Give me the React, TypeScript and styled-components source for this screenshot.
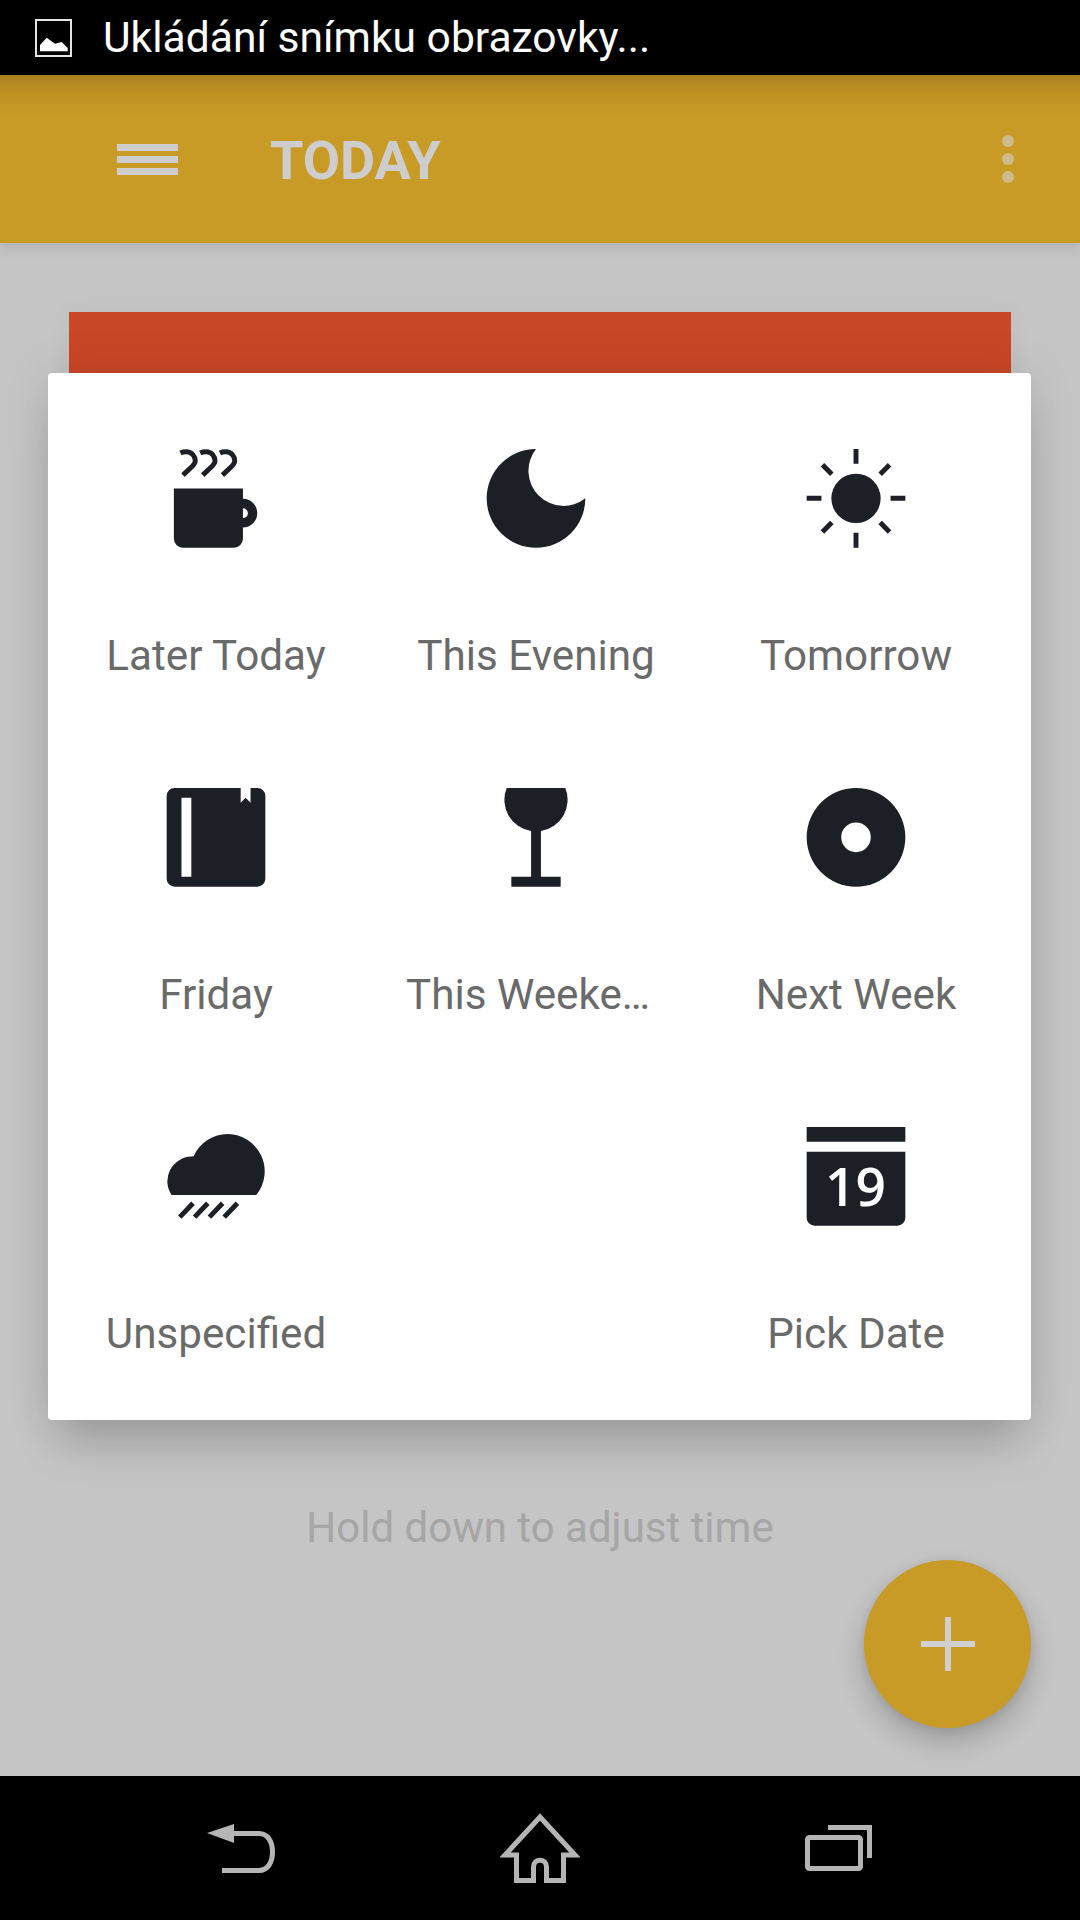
import React from 'react';
import styled, { createGlobalStyle } from 'styled-components';

const GlobalStyle = createGlobalStyle`
  html, body {
    margin: 0;
    padding: 0;
    background: #000;
  }
  * {
    box-sizing: border-box;
  }
`;

const Screen = styled.div`
  width: 1080px;
  height: 1920px;
  display: flex;
  flex-direction: column;
  overflow: hidden;
  font-family: Roboto, "Liberation Sans", sans-serif;
`;

const StatusBar = styled.div`
  height: 75px;
  flex: none;
  background: #000;
  display: flex;
  align-items: center;
  gap: 31px;
  padding-left: 35px;
`;

const StatusText = styled.span`
  color: #fff;
  font-size: 42.6px;
  line-height: 75px;
`;

const AppBar = styled.header`
  height: 168px;
  flex: none;
  position: relative;
  z-index: 2;
  display: flex;
  align-items: center;
  padding: 0 66px 0 117px;
  gap: 92px;
  background: linear-gradient(#ac8320 0, #c09325 22px, #c89a26 40px);
  box-shadow: 0 3px 14px rgba(0, 0, 0, 0.12);
`;

const Title = styled.h1`
  margin: 3px 0 0;
  color: #cdcdcd;
  font-size: 54px;
  font-weight: 700;
  line-height: 60px;
`;

const Dots = styled.div`
  margin-left: auto;
  display: flex;
  flex-direction: column;
  gap: 6px;
`;

const Dot = styled.span`
  width: 12px;
  height: 12px;
  border-radius: 50%;
  background: #cdbb8c;
`;

const Content = styled.main`
  flex: 1;
  position: relative;
  display: flex;
  flex-direction: column;
  padding: 69px 69px 223px;
  background: #c5c5c5;
`;

const Card = styled.div`
  height: 200px;
  background: #c94627;
  box-shadow: 0 0 24px rgba(0, 0, 0, 0.04);
`;

const Hint = styled.p`
  margin: auto 0 0;
  color: #a6a6a6;
  font-size: 42px;
  line-height: 50px;
  text-align: center;
`;

const Dialog = styled.div`
  position: absolute;
  top: 130px;
  left: 48px;
  width: 983px;
  padding: 76px 15px 62px 8px;
  display: grid;
  grid-template-columns: repeat(3, 320px);
  row-gap: 108px;
  background: #fff;
  border-radius: 4px;
  box-shadow: 0 0 48px rgba(0, 0, 0, 0.1), 0 34px 44px -12px rgba(0, 0, 0, 0.18);
`;

const Cell = styled.div`
  height: 231px;
  display: flex;
  flex-direction: column;
  align-items: center;
`;

const IconBox = styled.svg`
  width: 100px;
  height: 100px;
  display: block;
  fill: #1c1f26;
  stroke: none;
`;

const Label = styled.div`
  width: 260px;
  margin-top: 83px;
  color: #6a6a6a;
  font-size: 42.2px;
  line-height: 50px;
  text-align: center;
  white-space: nowrap;
  overflow: hidden;
  text-overflow: ellipsis;
`;

const Fab = styled.button`
  position: absolute;
  right: 49px;
  bottom: 48px;
  width: 167px;
  height: 168px;
  padding: 0;
  border: 0;
  border-radius: 50%;
  display: flex;
  align-items: center;
  justify-content: center;
  background: #c89a26;
  box-shadow: 0 14px 28px rgba(0, 0, 0, 0.2), 0 2px 10px rgba(0, 0, 0, 0.08);
`;

const NavBar = styled.nav`
  height: 144px;
  flex: none;
  background: #000;
  display: flex;
  align-items: flex-start;
  gap: 223px;
  padding: 36px 0 0 207px;
`;

const NavIcon = styled.svg`
  display: block;
  height: 72px;
  fill: none;
  stroke: #b5b5b5;
  stroke-width: 5;
`;

const Stroked = styled.g`
  fill: none;
  stroke: #1c1f26;
  stroke-width: 5;
`;

const CupIcon = () => (
  <IconBox viewBox="0 0 100 100">
    <Stroked>
      <path d="M14 4C16 3 18 2.8 20 2.8C25.5 2.8 29 7.5 29 12C29 14.5 27.5 16 26 17.5L16.5 26.5" />
      <path d="M34 4C36 3 38 2.8 40 2.8C45.5 2.8 49 7.5 49 12C49 14.5 47.5 16 46 17.5L36.5 26.5" />
      <path d="M54 4C56 3 58 2.8 60 2.8C65.5 2.8 69 7.5 69 12C69 14.5 67.5 16 66 17.5L56.5 26.5" />
    </Stroked>
    <path d="M7.3 40H77.3V50.5A14.5 14.5 0 0 1 77.3 79.5V91A9 9 0 0 1 68.3 100H16.3A9 9 0 0 1 7.3 91Z M77.3 60V70A5 5 0 0 0 77.3 60Z" fillRule="evenodd" />
  </IconBox>
);

const MoonIcon = () => (
  <IconBox viewBox="0 0 100 100">
    <path d="M50 0A50 50 0 1 0 100 50A35.6 35.6 0 0 1 50 0Z" />
  </IconBox>
);

const SunIcon = () => (
  <IconBox viewBox="0 0 100 100">
    <circle cx="50" cy="50" r="25" />
    <Stroked>
      <path d="M50 0V15M50 85V100M0 50H15M85 50H100M16 16L25.5 25.5M74.5 74.5L84 84M84 16L74.5 25.5M25.5 74.5L16 84" />
    </Stroked>
  </IconBox>
);

const BookIcon = () => (
  <IconBox viewBox="0 0 100 100">
    <path
      fillRule="evenodd"
      d="M8 0H75V15L80 10L85 15V0H92A8 8 0 0 1 100 8V92A8 8 0 0 1 92 100H8A8 8 0 0 1 0 92V8A8 8 0 0 1 8 0Z M15 10V90H25V10Z"
    />
  </IconBox>
);

const GlassIcon = () => (
  <IconBox viewBox="0 0 100 100">
    <path d="M20.3 0H79.7A32 32 0 0 1 55 43.6V90H75V100H25V90H45V43.6A32 32 0 0 1 20.3 0Z" />
  </IconBox>
);

const DiscIcon = () => (
  <IconBox viewBox="0 0 100 100">
    <path
      fillRule="evenodd"
      d="M50 0A50 50 0 1 1 50 100A50 50 0 1 1 50 0Z M50 35A15 15 0 1 0 50 65A15 15 0 1 0 50 35Z"
    />
  </IconBox>
);

const CloudIcon = () => (
  <IconBox viewBox="0 0 100 100">
    <path d="M5 69A25 25 0 0 1 25 30L27.3 29.7A38 38 0 0 1 62 7A38 38 0 0 1 90.8 69Z" />
    <Stroked>
      <path d="M13.3 91.3L26.7 77.3M28.3 91.3L41.7 77.3M43.3 91.3L56.7 77.3M58.3 91.3L71.7 77.3" />
    </Stroked>
  </IconBox>
);

const DateNumber = styled.text`
  fill: #fff;
  font-family: "Open Sans", "Noto Sans", sans-serif;
  font-size: 54px;
  font-weight: 600;
  text-anchor: middle;
`;

const CalendarIcon = () => (
  <IconBox viewBox="0 0 100 100">
    <path d="M0 0H100V15H0Z M0 25H100V92A8 8 0 0 1 92 100H8A8 8 0 0 1 0 92Z" />
    <DateNumber x="49.5" y="80.5">19</DateNumber>
  </IconBox>
);

const options = [
  { label: 'Later Today', icon: <CupIcon /> },
  { label: 'This Evening', icon: <MoonIcon /> },
  { label: 'Tomorrow', icon: <SunIcon /> },
  { label: 'Friday', icon: <BookIcon /> },
  { label: 'This Weekend', icon: <GlassIcon /> },
  { label: 'Next Week', icon: <DiscIcon /> },
  { label: 'Unspecified', icon: <CloudIcon /> },
  null,
  { label: 'Pick Date', icon: <CalendarIcon /> },
];

const App = () => (
  <Screen>
    <GlobalStyle />
    <StatusBar>
      <svg width="37" height="38" viewBox="0 0 37 38">
        <rect x="1" y="1" width="35" height="36" fill="none" stroke="#e4e4e4" strokeWidth="2" />
        <path d="M5 32.3V26L11.7 18.7L20 24.7L26.7 23L32.7 29V32.3Z" fill="#fff" />
      </svg>
      <StatusText>Ukládání snímku obrazovky...</StatusText>
    </StatusBar>

    <AppBar>
      <svg width="61" height="31" viewBox="0 0 61 31">
        <path d="M0 0H61V7H0Z M0 12H61V19H0Z M0 24H61V31H0Z" fill="#cdcdcd" />
      </svg>
      <Title>TODAY</Title>
      <Dots>
        <Dot />
        <Dot />
        <Dot />
      </Dots>
    </AppBar>

    <Content>
      <Card />
      <Hint>Hold down to adjust time</Hint>
      <Dialog>
        {options.map((option, i) => (
          <Cell key={i}>
            {option && option.icon}
            {option && <Label>{option.label}</Label>}
          </Cell>
        ))}
      </Dialog>
      <Fab>
        <svg width="54" height="54" viewBox="0 0 54 54">
          <path d="M24 0H30V24H54V30H30V54H24V30H0V24H24Z" fill="#cfcfcf" />
        </svg>
      </Fab>
    </Content>

    <NavBar>
      <NavIcon width="70" viewBox="0 0 70 72">
        <path d="M0 21L27 12V31Z" fill="#b5b5b5" stroke="none" />
        <path d="M27 21.5H52C61 21.5 65.5 30 65.5 40C65.5 50 61 58.5 52 58.5H15" />
      </NavIcon>
      <NavIcon width="80" viewBox="0 0 80 72">
        <path d="M40 5L75 43H63.5V68.5H46.5V55C46.5 46 33.5 46 33.5 55V68.5H16.5V43H5Z" />
      </NavIcon>
      <NavIcon width="72" viewBox="0 0 72 72">
        <rect x="4.5" y="25.5" width="53" height="31" rx="2" />
        <path d="M25 15.5H66.5V46" />
      </NavIcon>
    </NavBar>
  </Screen>
);

export default App;
